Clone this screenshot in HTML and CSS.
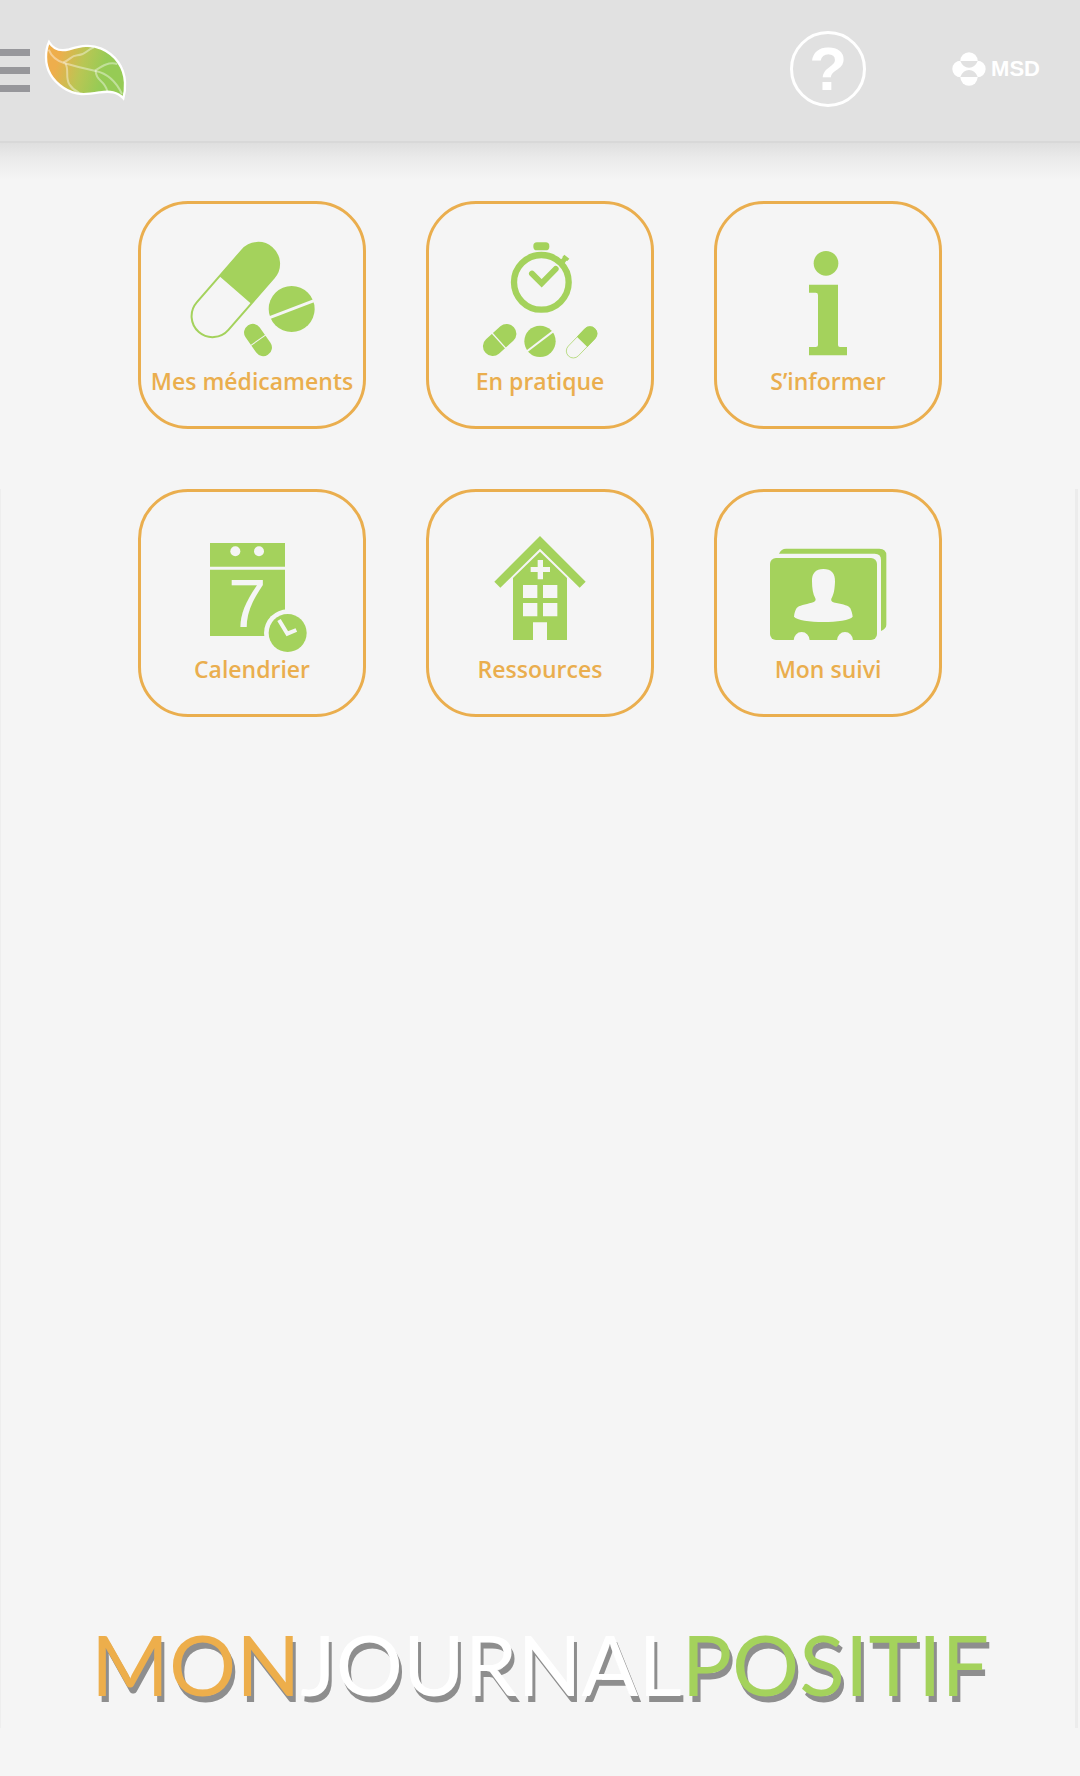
FILE: index.html
```html
<!DOCTYPE html>
<html lang="fr">
<head>
    <meta charset="UTF-8">
    <meta name="viewport" content="width=device-width, initial-scale=1.0">
    <title>Mon Journal Positif</title>
    <link rel="stylesheet" href="styles.css">
</head>
<body>
    <!-- Top bar -->
    <header class="topbar">
        <button class="menu-btn" type="button" aria-label="Menu">
            <span class="bar"></span>
            <span class="bar"></span>
            <span class="bar"></span>
        </button>
        <a class="leaf" href="#" aria-label="Accueil">
            <svg viewBox="129 112 258 192">
                <defs>
                    <linearGradient id="leafFill" x1="0" y1="0" x2="1" y2="0.2">
                        <stop offset="0.2" stop-color="#eeae4c"/>
                        <stop offset="0.52" stop-color="#b9c654"/>
                        <stop offset="0.8" stop-color="#96cb55"/>
                    </linearGradient>
                </defs>
                <path d="M147 127 C160 149 180 156 207 149 C245 138 272 133 304 147 C348 166 373 205 375 248 C376 268 374 282 370 296 C352 276 330 274 300 278 C262 284 228 290 190 264 C154 240 138 205 138 172 C138 155 141 140 147 127 Z" fill="url(#leafFill)" stroke="#fff" stroke-width="7" stroke-linejoin="miter"/>
                <g fill="none" stroke="#fff" stroke-opacity="0.4" stroke-width="6">
                    <path d="M146 150 C155 172 172 184 192 190 C225 200 258 208 287 214 C325 222 348 245 366 283"/>
                    <path d="M190 188 C210 182 212 168 232 167 C258 166 256 152 282 143"/>
                    <path d="M196 191 C208 210 195 232 208 254 C216 266 226 274 238 280"/>
                    <path d="M285 213 C308 198 325 186 352 193"/>
                    <path d="M287 214 C288 246 314 240 322 275"/>
                </g>
            </svg>
        </a>
        <a class="help" href="#" aria-label="Aide">?</a>
        <a class="brand" href="#">
            <svg viewBox="578 124 102 102">
                <g fill="#fff">
                    <circle cx="629" cy="151" r="26"/>
                    <circle cx="629" cy="199" r="26"/>
                    <circle cx="604" cy="175" r="25"/>
                    <circle cx="654" cy="175" r="25"/>
                </g>
                <g fill="#e1e1e1">
                    <path d="M603 151 H655 Q647 171 629 171 Q611 171 603 151 Z"/>
                    <path d="M603 199 H655 Q647 178 629 178 Q611 178 603 199 Z"/>
                </g>
            </svg>
            <span>MSD</span>
        </a>
    </header>

    <!-- Home menu -->
    <main>
        <nav class="tiles">
            <a class="tile" href="#">
                <svg viewBox="33 27 666 480">
                    <g transform="translate(316 285) rotate(-49)">
                        <rect x="-167" y="-63" width="334" height="126" rx="63" class="line" stroke-width="6"/>
                        <path d="M0 -64 H103 A64 64 0 0 1 103 64 H0 Z" class="fill"/>
                    </g>
                    <circle cx="485" cy="342" r="69" class="fill"/>
                    <path d="M413 370 L560 314" class="cut" stroke-width="9"/>
                    <g transform="translate(384 435) rotate(55)">
                        <rect x="-53" y="-26" width="106" height="52" rx="25" class="fill"/>
                        <path d="M1 -28 V28" class="cut" stroke-width="3"/>
                    </g>
                </svg>
                <span class="label">Mes médicaments</span>
            </a>
            <a class="tile" href="#">
                <svg viewBox="27 27 666 480">
                    <rect x="340" y="142" width="48" height="24" rx="11" class="fill"/>
                    <circle cx="364" cy="262" r="82" class="line" stroke-width="19"/>
                    <path d="M416 200 L428 188 L427 186 L433 179 L448 191 L442 198 L439 197 L430 211 Z" class="fill"/>
                    <path d="M336 236 L365 265 L407 222" class="line" stroke-width="18" stroke-linecap="round"/>
                    <g transform="translate(239 435) rotate(-42)">
                        <rect x="-57" y="-29" width="114" height="58" rx="28" class="fill"/>
                        <path d="M-3 -32 V32" class="cut" stroke-width="4"/>
                    </g>
                    <circle cx="360" cy="439" r="47" class="fill"/>
                    <path d="M318 471 L402 407" class="cut" stroke-width="6"/>
                    <g transform="translate(485 442) rotate(-46)">
                        <rect x="-57" y="-21" width="114" height="42" rx="21" class="line" stroke-width="2"/>
                        <path d="M2 -22 H36 A22 22 0 0 1 36 22 H2 Z" class="fill"/>
                    </g>
                </svg>
                <span class="label">En pratique</span>
            </a>
            <a class="tile" href="#">
                <svg viewBox="36 27 666 480">
                    <circle cx="363" cy="205" r="37" class="fill"/>
                    <path d="M312 269 H399 V450 Q399 456 405 456 H426 V481 H312 V456 H332 Q339 456 339 450 V300 Q339 293 332 293 H312 Z" class="fill"/>
                </svg>
                <span class="label">S’informer</span>
            </a>
            <a class="tile" href="#">
                <svg viewBox="33 36 666 480">
                    <rect x="240" y="189" width="225" height="279" class="fill"/>
                    <path d="M238 265 H467" class="cut" stroke-width="9"/>
                    <circle cx="316" cy="214" r="15" class="hole"/>
                    <circle cx="387" cy="214" r="15" class="hole"/>
                    <text x="295" y="441" class="day">7</text>
                    <circle cx="473" cy="459" r="71" class="hole"/>
                    <circle cx="473" cy="459" r="57" class="fill"/>
                    <path d="M447 420 L472 461 L499 450" class="cut" stroke-width="12"/>
                </svg>
                <span class="label">Calendrier</span>
            </a>
            <a class="tile" href="#">
                <svg viewBox="27 36 666 480">
                    <path d="M360 168 L497 305 L479 323 L360 206 L241 323 L223 305 Z" class="fill"/>
                    <path d="M360 215 L441 294 V480 H381 V427 H339 V480 H279 V294 Z" class="fill"/>
                    <path d="M353 240 H369 V261 H390 V276 H369 V298 H353 V276 H332 V261 H353 Z" class="hole"/>
                    <path d="M309 315 H352 V354 H309 Z M369 315 H412 V354 H369 Z M309 369 H352 V409 H309 Z M369 369 H412 V409 H369 Z" class="hole"/>
                </svg>
                <span class="label">Ressources</span>
            </a>
            <a class="tile" href="#">
                <svg viewBox="36 36 666 480">
                    <path d="M222 221 Q229 206 243 206 H523 Q544 206 544 226 V434 Q544 446 528 453 V240 Q528 221 509 221 Z" class="fill"/>
                    <rect x="195" y="234" width="321" height="246" rx="18" class="fill"/>
                    <path d="M355 267 C379 267 391 280 390 305 C389 330 386 344 379 356 C377 364 383 367 394 369 C415 373 432 377 436 385 C440 394 442 402 443 410 C436 420 395 426 355 426 C315 426 275 420 267 410 C268 399 271 391 275 384 C281 376 302 373 320 368 C330 366 334 361 331 355 C324 343 321 325 321 304 C320 280 332 267 355 267 Z" class="hole"/>
                    <path d="M266 481 A24 25 0 0 1 314 481 Z M396 481 A24 25 0 0 1 444 481 Z" class="hole"/>
                </svg>
                <span class="label">Mon suivi</span>
            </a>
        </nav>
    </main>

    <h1 class="title"><span class="mon">MON</span><span class="journal">JOURNAL</span><span class="positif">POSITIF</span></h1>

    <!-- Faint shadow on both sides -->
    <div class="side-shadow"></div>
</body>
</html>
```

FILE: styles.css
```css
* { box-sizing: border-box; }

body {
    margin: 0;
    min-height: 100vh;
    display: flex;
    flex-direction: column;
    position: relative;
    background-color: #f5f5f5;
    font-family: "Open Sans", "Noto Sans", sans-serif;
}

a { text-decoration: none; }
svg { display: block; }

/* Top bar */
.topbar {
    display: flex;
    align-items: center;
    height: 143px;
    padding: 0 40px 4px 0;
    background-color: #e1e1e1;
    border-bottom: 2px solid #d8d8d8;
}

.menu-btn {
    display: flex;
    flex-direction: column;
    gap: 11px;
    width: 30px;
    padding: 4px 0 0;
    border: none;
    background: none;
    cursor: pointer;
}
.menu-btn .bar { height: 7px; background-color: #97979b; }

.leaf { width: 86px; margin-left: 13px; }

.help {
    display: flex;
    align-items: center;
    justify-content: center;
    width: 76px;
    height: 76px;
    margin-left: auto;
    border: 3px solid #fff;
    border-radius: 50%;
    color: #fff;
    font: bold 62px "Liberation Sans", Arial, sans-serif;
}

.brand {
    display: flex;
    align-items: center;
    gap: 5px;
    margin-left: 86px;
    color: #fff;
    font: bold 22px "Liberation Sans", Arial, sans-serif;
}
.brand svg { width: 34px; }

/* Home menu */
main {
    flex: 1;
    padding: 58px 138px 0;
    background: linear-gradient(#dfdfdf, #ebebeb 16px, #f5f5f5 36px);
}

.tiles {
    display: grid;
    grid-template-columns: repeat(3, 1fr);
    gap: 60px;
}

.tile {
    aspect-ratio: 1;
    border: 3px solid #eaae4e;
    border-radius: 50px;
    color: #eaae4e;
    text-align: center;
}

.label {
    display: block;
    font-size: 23px;
    font-weight: 600;
    line-height: 34px;
    white-space: nowrap;
}

/* Icon parts */
.fill { fill: #a4d25c; }
.line { fill: none; stroke: #a4d25c; }
.cut { fill: none; stroke: #f5f5f5; }
.hole { fill: #f5f5f5; }
.day { fill: #f5f5f5; font: 205px "Liberation Sans", Arial, sans-serif; }

/* App name */
.title {
    margin: 0;
    padding-bottom: 52px;
    text-align: center;
    font-family: Lato, "Open Sans", sans-serif;
    font-size: 84px;
    font-weight: 400;
    line-height: 120px;
    text-shadow: 3px 6px 0 #8e8e8e;
}
.mon { color: #edae4b; }
.journal { color: #fff; }
.positif { color: #a4d25c; }

.side-shadow {
    position: absolute;
    top: 489px;
    bottom: 48px;
    left: 0;
    right: 2px;
    border-left: 1px solid #eee;
    border-right: 3px solid #ececec;
    pointer-events: none;
}
```
